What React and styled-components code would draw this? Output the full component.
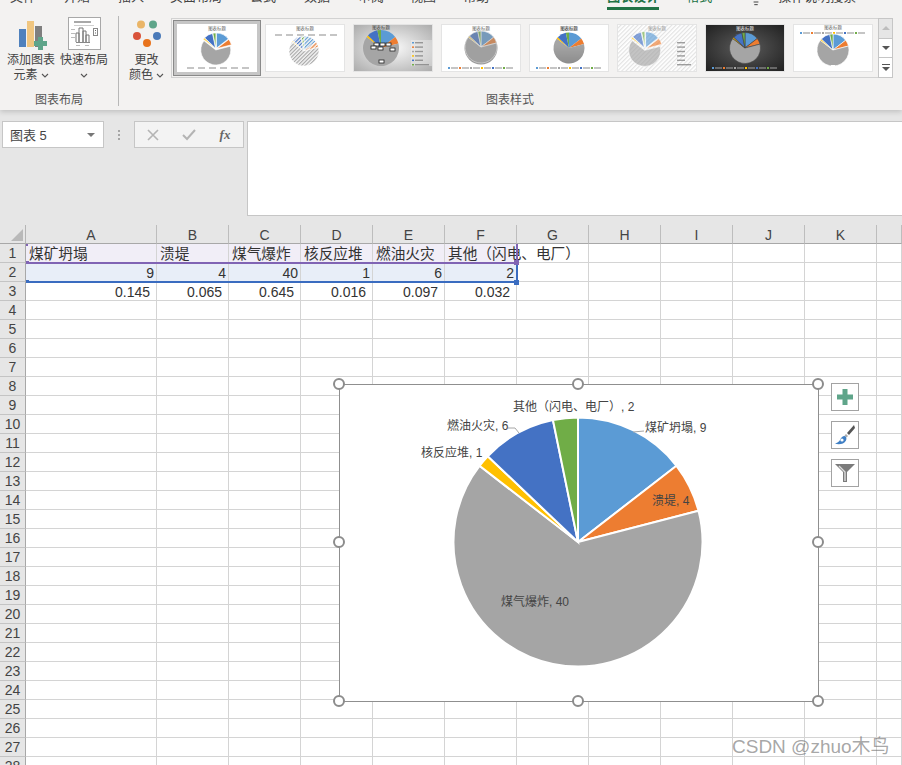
import React from "react";
import styled, { createGlobalStyle } from "styled-components";
import { Lightbulb } from "lucide-react";

const CJK = `"Liberation Sans", "Noto Sans CJK SC", sans-serif`;

const GlobalStyle = createGlobalStyle`
  html, body {
    margin: 0;
    padding: 0;
    background: #fff;
  }
  body {
    font-family: ${CJK};
    overflow: hidden;
  }
`;

const Page = styled.div`
  width: 902px;
  height: 765px;
  overflow: hidden;
  position: relative;
  background: #fff;
`;

const Ribbon = styled.div`
  height: 110px;
  background: #f3f2f1;
  box-shadow: 0 2px 5px rgba(0, 0, 0, 0.16);
  position: relative;
  z-index: 2;
`;

const TabBar = styled.div`
  height: 10px;
  overflow: hidden;
  display: flex;
  padding-left: 10px;
`;

const Tab = styled.div`
  height: 20px;
  margin-top: -10px;
  margin-left: ${props => props.$gap || 28}px;
  box-sizing: border-box;
  font-size: ${props => props.$size || 13}px;
  line-height: 13px;
  color: ${props => (props.$green ? "#217346" : "#444")};
  font-weight: ${props => (props.$active ? 700 : 400)};
  border-bottom: ${props => (props.$active ? "3px solid #217346" : "none")};
  white-space: nowrap;
  &:first-child {
    margin-left: 0;
  }
`;

const BulbWrap = styled.div`
  margin-left: 36px;
  margin-top: -10px;
  color: #444;
`;

const SearchTab = styled(Tab)`
  margin-left: 14px;
`;

const RibbonBody = styled.div`
  height: 100px;
  display: flex;
`;

const Group = styled.div`
  width: ${props => props.$width}px;
  flex: none;
  display: flex;
  flex-direction: column;
  box-sizing: border-box;
  position: relative;
`;

const GroupDivider = styled.div`
  width: 1px;
  height: 90px;
  margin-top: 6px;
  background: #b8b8b8;
  flex: none;
`;

const GroupRow = styled.div`
  height: 80px;
  display: flex;
  padding-top: ${props => props.$top || 0}px;
  padding-left: ${props => props.$left || 0}px;
  box-sizing: border-box;
`;

const GroupLabel = styled.div`
  font-size: 12px;
  line-height: 14px;
  color: #555;
  text-align: center;
  margin-top: 3px;
`;

const GalleryLabel = styled(GroupLabel)`
  margin-top: 15px;
  margin-right: 52px;
`;

const RibbonButton = styled.div`
  width: ${props => props.$width}px;
  display: flex;
  flex-direction: column;
  align-items: center;
  font-size: 12px;
  line-height: 15px;
  color: #444;
`;

const ButtonIcon = styled.div`
  height: 32px;
  box-sizing: border-box;
  display: flex;
  align-items: flex-end;
  margin-bottom: 3px;
  padding-left: ${props => props.$shift || 0}px;
  padding-bottom: ${props => props.$lift || 0}px;
`;

const ButtonLine = styled.div`
  display: flex;
  align-items: center;
  gap: 3px;
  height: 15px;
  white-space: nowrap;
`;

const Gallery = styled.div`
  display: flex;
  height: 60px;
  margin-top: 8px;
  margin-left: 1px;
`;

const GalleryTrack = styled.div`
  width: 707px;
  height: 60px;
  box-sizing: border-box;
  border: 1px solid #d2d2d2;
  border-right: none;
  display: flex;
  align-items: center;
  gap: 8px;
  padding-left: 1px;
`;

const Selected = styled.div`
  width: 88px;
  height: 56px;
  box-sizing: border-box;
  border: 1px solid #8a8a8a;
  background: #c6c6c6;
  display: flex;
  align-items: center;
  justify-content: center;
  margin-right: -4px;
  flex: none;
`;

const Thumb = styled.div`
  width: 80px;
  height: 48px;
  flex: none;
  box-sizing: border-box;
  border: ${props => (props.$plain ? "none" : "1px solid #e4e4e4")};
  background: #fff;
  overflow: hidden;
  svg {
    display: block;
    margin: ${props => (props.$plain ? "0" : "-1px")};
  }
`;

const Scroller = styled.div`
  width: 15px;
  height: 60px;
  box-sizing: border-box;
  border: 1px solid #c6c6c6;
  display: flex;
  flex-direction: column;
  background: #fff;
`;

const ScrollBtn = styled.div`
  flex: 1;
  display: flex;
  align-items: center;
  justify-content: center;
  background: ${props => (props.$off ? "#e6e6e6" : "#fff")};
  border-bottom: ${props => (props.$last ? "none" : "1px solid #c6c6c6")};
`;

const FormulaArea = styled.div`
  height: 115px;
  background: #e6e6e6;
  display: flex;
  align-items: flex-start;
  padding: 11px 0 0 2px;
  box-sizing: border-box;
`;

const NameBox = styled.div`
  width: 102px;
  height: 27px;
  box-sizing: border-box;
  background: #fff;
  border: 1px solid #c6c6c6;
  display: flex;
  align-items: center;
  justify-content: space-between;
  padding: 0 8px 0 7px;
  font-size: 13px;
  color: #444;
`;

const DownArrow = styled.div`
  width: 0;
  height: 0;
  border-left: 4px solid transparent;
  border-right: 4px solid transparent;
  border-top: 4px solid #777;
`;

const Dots = styled.div`
  width: 30px;
  height: 27px;
  display: flex;
  flex-direction: column;
  align-items: center;
  justify-content: center;
  gap: 2px;
  i {
    width: 2px;
    height: 2px;
    background: #a6a6a6;
  }
`;

const FormulaButtons = styled.div`
  width: 110px;
  height: 27px;
  box-sizing: border-box;
  background: #f3f3f3;
  border: 1px solid #c6c6c6;
  display: grid;
  grid-template-columns: repeat(3, 36px);
  align-items: center;
  justify-items: center;
  color: #b4b4b4;
`;

const Fx = styled.span`
  font-family: "Liberation Serif", serif;
  font-style: italic;
  font-weight: 700;
  font-size: 13px;
  color: #666;
`;

const FormulaInput = styled.div`
  flex: 1;
  height: 93px;
  margin-left: 3px;
  background: #fff;
  border: 1px solid #c6c6c6;
  border-right: none;
`;

const Sheet = styled.div`
  position: relative;
  display: grid;
  grid-template-columns: 26px 131px repeat(10, 72px) 25px;
  grid-template-rows: 19px;
  grid-auto-rows: 19px;
`;

const Corner = styled.div`
  background: #e6e6e6;
  border-right: 1px solid #b5b5b5;
  border-bottom: 1px solid #a8a8a8;
  box-sizing: border-box;
  position: relative;
  &::after {
    content: "";
    position: absolute;
    left: 11px;
    top: 4px;
    width: 12px;
    height: 12px;
    background: #b9b9b9;
    clip-path: polygon(100% 0, 100% 100%, 0 100%);
  }
`;

const ColHead = styled.div`
  background: #e6e6e6;
  border-right: 1px solid #bdbdbd;
  border-bottom: 1px solid #a8a8a8;
  box-sizing: border-box;
  font-size: 14px;
  line-height: 21px;
  text-align: center;
  color: #444;
`;

const RowHead = styled.div`
  background: #e6e6e6;
  border-right: 1px solid #a8a8a8;
  border-bottom: 1px solid #c4c4c4;
  box-sizing: border-box;
  font-size: 14px;
  line-height: 19px;
  text-align: center;
  color: #444;
`;

const Cell = styled.div`
  background: ${props => props.$tint || "transparent"};
  border-right: ${props => (props.$open ? "none" : "1px solid #d4d4d4")};
  border-bottom: 1px solid #d4d4d4;
  box-sizing: border-box;
  font-size: ${props => (props.$num ? 14 : 14.67)}px;
  line-height: 20px;
  color: #333;
  padding: 0 ${props => props.$pad || 0}px 0 ${props => (props.$num ? 0 : 3)}px;
  text-align: ${props => (props.$num ? "right" : "left")};
  white-space: nowrap;
  min-width: 0;
`;

const RangeLine = styled.div`
  position: absolute;
  left: 27px;
  width: 489px;
  height: 2px;
  top: ${props => props.$top}px;
  background: ${props => props.$color};
`;

const RangeEdge = styled.div`
  position: absolute;
  left: 516px;
  width: 2px;
  top: ${props => props.$top}px;
  height: ${props => props.$height}px;
  background: ${props => props.$color};
`;

const RangeKnob = styled.div`
  position: absolute;
  left: ${props => props.$left}px;
  top: ${props => props.$top}px;
  width: ${props => props.$size}px;
  height: ${props => props.$size}px;
  background: ${props => props.$color};
`;

const ChartFrame = styled.div`
  position: absolute;
  left: 339px;
  top: 159px;
  width: 480px;
  height: 318px;
  box-sizing: border-box;
  background: #fff;
  border: 1px solid #8f8f8f;
`;

const Handle = styled.div`
  position: absolute;
  left: ${props => props.$x}px;
  top: ${props => props.$y}px;
  width: 12px;
  height: 12px;
  box-sizing: border-box;
  border-radius: 50%;
  background: #fff;
  border: 2px solid #8c8c8c;
  transform: translate(-50%, -50%);
`;

const SideTools = styled.div`
  position: absolute;
  left: 831px;
  top: 158px;
  display: flex;
  flex-direction: column;
  gap: 10px;
`;

const SideTool = styled.div`
  width: 28px;
  height: 28px;
  box-sizing: border-box;
  background: #fff;
  border: 1px solid #a3a3a3;
  display: flex;
  align-items: center;
  justify-content: center;
`;

const Watermark = styled.div`
  position: absolute;
  left: 732px;
  top: 735px;
  font-size: 19px;
  line-height: 24px;
  color: rgba(110, 110, 110, 0.62);
  white-space: nowrap;
  z-index: 4;
`;

const ChartText = styled.text`
  font-family: ${CJK};
  font-size: 12px;
  fill: #444;
`;

const TitleText = styled.text`
  font-family: ${CJK};
  font-size: 4.4px;
  text-anchor: middle;
  fill: ${props => props.$fill || "#666"};
`;

const SERIES = [
  { label: "煤矿坍塌", value: 9, color: "#5b9bd5" },
  { label: "溃堤", value: 4, color: "#ed7d31" },
  { label: "煤气爆炸", value: 40, color: "#a5a5a5" },
  { label: "核反应堆", value: 1, color: "#ffc000" },
  { label: "燃油火灾", value: 6, color: "#4472c4" },
  { label: "其他（闪电、电厂）", value: 2, color: "#70ad47" }
];

const TOTAL = SERIES.reduce((sum, s) => sum + s.value, 0);

const getSlices = (cx, cy, r, explode = 0) => {
  let start = 0;
  return SERIES.map(s => {
    const end = start + (s.value / TOTAL) * Math.PI * 2;
    const mid = (start + end) / 2;
    const ox = cx + Math.sin(mid) * explode;
    const oy = cy - Math.cos(mid) * explode;
    const x1 = ox + Math.sin(start) * r;
    const y1 = oy - Math.cos(start) * r;
    const x2 = ox + Math.sin(end) * r;
    const y2 = oy - Math.cos(end) * r;
    const large = end - start > Math.PI ? 1 : 0;
    start = end;
    return {
      ...s,
      d: `M${ox} ${oy}L${x1} ${y1}A${r} ${r} 0 ${large} 1 ${x2} ${y2}Z`
    };
  });
};

const legendCols = ["#5b9bd5", "#ed7d31", "#a5a5a5", "#ffc000", "#4472c4", "#70ad47"];

const BottomLegend = ({ y, colored, fill = "#777" }) => (
  <g>
    {legendCols.map((c, i) => (
      <g key={c}>
        {colored && <rect x={7 + i * 11} y={y} width={2} height={2} fill={c} />}
        <rect x={10 + i * 11} y={y + 0.4} width={7} height={1.2} fill={fill} opacity="0.7" />
      </g>
    ))}
  </g>
);

const SideLegend = ({ x, y, colored }) => (
  <g>
    {legendCols.map((c, i) => (
      <g key={c}>
        {colored && <rect x={x} y={y + i * 4.4} width={2} height={1.5} fill={c} />}
        <rect x={x + 3} y={y + i * 4.4} width={i === 5 ? 14 : 8} height={1.4} fill="#777" opacity="0.7" />
      </g>
    ))}
  </g>
);

const MiniPie = ({ cx, cy, r, explode, stroke = "#fff", fade, hatch, gray }) => (
  <g>
    {getSlices(cx, cy, r, explode).map(s => (
      <path
        key={s.label}
        d={s.d}
        fill={hatch ? `url(#hatch-${s.value})` : s.color}
        fillOpacity={fade || 1}
        stroke={stroke}
        strokeWidth="0.6"
      />
    ))}
    {gray && <circle cx={cx} cy={cy} r={r} fill={`url(#${gray})`} />}
  </g>
);

const HatchDefs = () => (
  <defs>
    {SERIES.map(s => (
      <pattern
        key={s.value}
        id={`hatch-${s.value}`}
        width="2.6"
        height="2.6"
        patternUnits="userSpaceOnUse"
        patternTransform="rotate(45)"
      >
        <rect width="2.6" height="2.6" fill="#f4f4f4" />
        <rect width="1.1" height="2.6" fill={s.color} />
      </pattern>
    ))}
  </defs>
);

const ThumbStyle1 = () => (
  <svg width="80" height="48">
    <TitleText x="40" y="6">图表标题</TitleText>
    <MiniPie cx={39} cy={25} r={15} explode={1} />
    <BottomLegend y={43} />
  </svg>
);

const ThumbStyle2 = () => (
  <svg width="80" height="48">
    <HatchDefs />
    <TitleText x="40" y="6">图表标题</TitleText>
    <BottomLegend y={10} />
    <MiniPie cx={39} cy={27} r={15} hatch />
  </svg>
);

const ThumbStyle3 = () => (
  <svg width="80" height="48">
    <defs>
      <radialGradient id="bg3" cx="50%" cy="50%" r="70%">
        <stop offset="0%" stopColor="#fafafa" />
        <stop offset="100%" stopColor="#aaa" />
      </radialGradient>
    </defs>
    <rect width="80" height="48" fill="url(#bg3)" />
    <TitleText x="28" y="5" $fill="#444">图表标题</TitleText>
    <MiniPie cx={28} cy={24} r={18} stroke="none" />
    {[[21, 19], [27, 19], [33, 19], [18, 22], [25, 23], [37, 24], [26, 36]].map(([x, y]) => (
      <rect key={x} x={x} y={y} width="5" height="3" fill="#fff" stroke="#222" strokeWidth="0.8" />
    ))}
    <rect x="58" y="16" width="21" height="26" fill="#fff" opacity="0.3" />
    <SideLegend x={59} y={18} colored />
  </svg>
);

const ThumbStyle4 = () => (
  <svg width="80" height="48">
    <TitleText x="40" y="5.5">图表标题</TitleText>
    <circle cx="40" cy="24" r="16.5" fill="#999" />
    <MiniPie cx={40} cy={23} r={16} stroke="#ddd" fade={0.55} />
    <BottomLegend y={43} colored />
  </svg>
);

const ThumbStyle5 = () => (
  <svg width="80" height="48">
    <defs>
      <linearGradient id="dark5" x1="0" y1="0" x2="0" y2="1">
        <stop offset="40%" stopColor="#000" stopOpacity="0" />
        <stop offset="100%" stopColor="#000" stopOpacity="0.15" />
      </linearGradient>
    </defs>
    <rect x="32" y="2" width="16" height="5" fill="#e4e4e4" />
    <TitleText x="40" y="6" $fill="#333">图表标题</TitleText>
    <MiniPie cx={40} cy={24} r={15.5} stroke="none" gray="dark5" />
    <BottomLegend y={43} colored />
  </svg>
);

const ThumbStyle6 = () => (
  <svg width="80" height="48">
    <defs>
      <pattern id="bg6" width="3" height="3" patternUnits="userSpaceOnUse" patternTransform="rotate(45)">
        <rect width="3" height="3" fill="#fff" />
        <rect width="1.2" height="3" fill="#e2e2e2" />
      </pattern>
    </defs>
    <rect width="80" height="48" fill="url(#bg6)" />
    <TitleText x="40" y="6" $fill="#999">图表标题</TitleText>
    <MiniPie cx={28} cy={25} r={16} explode={1.4} fade={0.65} />
    <SideLegend x={57} y={18} />
  </svg>
);

const ThumbStyle7 = () => (
  <svg width="80" height="48">
    <defs>
      <radialGradient id="bg7" cx="50%" cy="50%" r="70%">
        <stop offset="0%" stopColor="#5c5c5c" />
        <stop offset="100%" stopColor="#1f1f1f" />
      </radialGradient>
    </defs>
    <rect width="80" height="48" fill="url(#bg7)" />
    <TitleText x="40" y="6" $fill="#eee">图表标题</TitleText>
    <MiniPie cx={40} cy={24} r={15.5} stroke="#444" />
    <BottomLegend y={43} colored fill="#bbb" />
  </svg>
);

const ThumbStyle8 = () => (
  <svg width="80" height="48">
    <TitleText x="40" y="5">图表标题</TitleText>
    <BottomLegend y={8} colored />
    <MiniPie cx={40} cy={26} r={16} />
    <rect x="38" y="41" width="4" height="1.5" fill="#fff" />
  </svg>
);

const Chevron = () => (
  <svg width="8" height="5" viewBox="0 0 8 5">
    <path d="M1 1l3 3 3-3" fill="none" stroke="#555" strokeWidth="1.1" />
  </svg>
);

const AddElementIcon = () => (
  <svg width="30" height="30" viewBox="0 0 30 30">
    <rect x="1" y="9" width="7" height="18" fill="#4f81bd" />
    <rect x="9" y="1" width="7" height="26" fill="#f0c680" />
    <rect x="17" y="6" width="7" height="21" fill="#7f7f7f" />
    <path d="M20 17h5v4h4v5h-4v4h-5v-4h-4v-5h4z" fill="#5fa58a" />
  </svg>
);

const QuickLayoutIcon = () => (
  <svg width="33" height="33" viewBox="0 0 33 33">
    <rect x="0.5" y="0.5" width="32" height="32" fill="#fff" stroke="#a8a8a8" />
    <rect x="6" y="4" width="17" height="2" fill="#a8a8a8" />
    <rect x="6" y="8" width="20" height="1" fill="#cfcfcf" />
    <rect x="3" y="12" width="4" height="1" fill="#bbb" />
    <rect x="3" y="16" width="4" height="1" fill="#bbb" />
    <rect x="3" y="20" width="4" height="1" fill="#bbb" />
    <path d="M8 25V16h3v9M11 25V11h4v14M15 25V14h3v11M18 25V18h3v7" fill="#fff" stroke="#777" />
    <rect x="8" y="25" width="14" height="1" fill="#888" />
    <rect x="25.5" y="11.5" width="4" height="7" fill="#fff" stroke="#888" />
    <rect x="27" y="13" width="1" height="1" fill="#666" />
    <rect x="27" y="15.5" width="1" height="1" fill="#666" />
    <rect x="8" y="28" width="4" height="1" fill="#bbb" />
    <rect x="17" y="28" width="4" height="1" fill="#bbb" />
  </svg>
);

const ColorDotsIcon = () => (
  <svg width="30" height="28" viewBox="0 0 30 28">
    <circle cx="9" cy="4.5" r="4" fill="#eab567" />
    <circle cx="21" cy="4.5" r="4" fill="#5fa58a" />
    <circle cx="5" cy="16" r="4" fill="#d9533a" />
    <circle cx="25" cy="16" r="4" fill="#4a7ab8" />
    <circle cx="15" cy="23" r="4" fill="#e8731c" />
  </svg>
);

const BrushIcon = () => (
  <svg width="22" height="22" viewBox="0 0 22 22">
    <path d="M20 1l1 3-6 7-2-2z" fill="#555" />
    <path d="M12 10l2 2-1.5 1.5-2-2z" fill="#aaa" />
    <path d="M11 12c-3 0-4 2-5 4-1 2-3 3-5 3.5 3 1.5 9 1 11-3 .8-1.6.5-3.4-1-4.5z" fill="#3f7fc4" />
    <circle cx="8" cy="16" r="1.6" fill="#fff" />
  </svg>
);

const FunnelIcon = () => (
  <svg width="22" height="20" viewBox="0 0 22 20">
    <path d="M1 1h20l-8 8v10H9V9z" fill="#7b7b7b" />
    <path d="M5 3l6 6v9" fill="none" stroke="#ddd" strokeWidth="1.4" />
  </svg>
);

const COLS = ["A", "B", "C", "D", "E", "F", "G", "H", "I", "J", "K", ""];

const CELLS = {
  1: ["煤矿坍塌", "溃堤", "煤气爆炸", "核反应堆", "燃油火灾", "其他（闪电、电厂）"],
  2: ["9", "4", "40", "1", "6", "2"],
  3: ["0.145", "0.065", "0.645", "0.016", "0.097", "0.032"]
};

const TINTS = { 1: "#f1eef7", 2: "#e8eef8" };

const HANDLES = [
  [339, 159],
  [578, 159],
  [818, 159],
  [339, 317],
  [818, 317],
  [339, 476],
  [578, 476],
  [818, 476]
];

const LABELS = [
  { text: "其他（闪电、电厂）, 2", x: 173, y: 26 },
  { text: "煤矿坍塌, 9", x: 305, y: 47 },
  { text: "燃油火灾, 6", x: 107, y: 45 },
  { text: "核反应堆, 1", x: 81, y: 72 },
  { text: "溃堤, 4", x: 312, y: 120 },
  { text: "煤气爆炸, 40", x: 161, y: 221 }
];

const THUMBS = [ThumbStyle2, ThumbStyle3, ThumbStyle4, ThumbStyle5, ThumbStyle6, ThumbStyle7, ThumbStyle8];

const App = () => {
  const rows = Array.from({ length: 28 }, (_, i) => i + 1);
  return (
    <Page>
      <GlobalStyle />
      <Ribbon>
        <TabBar>
          <Tab>文件</Tab>
          <Tab>开始</Tab>
          <Tab>插入</Tab>
          <Tab $gap={26}>页面布局</Tab>
          <Tab>公式</Tab>
          <Tab>数据</Tab>
          <Tab>审阅</Tab>
          <Tab $gap={26}>视图</Tab>
          <Tab $gap={27}>帮助</Tab>
          <Tab $gap={27} $size={12}>NORDVPN</Tab>
          <Tab $gap={31} $green $active>图表设计</Tab>
          <Tab $gap={27} $green>格式</Tab>
          <BulbWrap>
            <Lightbulb size={16} strokeWidth={1.5} />
          </BulbWrap>
          <SearchTab>操作说明搜索</SearchTab>
        </TabBar>
        <RibbonBody>
          <Group $width={118}>
            <GroupRow $top={8} $left={4}>
              <RibbonButton $width={54}>
                <ButtonIcon $shift={4}><AddElementIcon /></ButtonIcon>
                <ButtonLine>添加图表</ButtonLine>
                <ButtonLine>元素 <Chevron /></ButtonLine>
              </RibbonButton>
              <RibbonButton $width={52}>
                <ButtonIcon><QuickLayoutIcon /></ButtonIcon>
                <ButtonLine>快速布局</ButtonLine>
                <ButtonLine><Chevron /></ButtonLine>
              </RibbonButton>
            </GroupRow>
            <GroupLabel>图表布局</GroupLabel>
          </Group>
          <GroupDivider />
          <Group $width={51}>
            <GroupRow $top={8} $left={4}>
              <RibbonButton $width={50}>
                <ButtonIcon $lift={2}><ColorDotsIcon /></ButtonIcon>
                <ButtonLine>更改</ButtonLine>
                <ButtonLine>颜色 <Chevron /></ButtonLine>
              </RibbonButton>
            </GroupRow>
          </Group>
          <Group $width={732}>
            <Gallery>
              <GalleryTrack>
                <Selected>
                  <Thumb $plain><ThumbStyle1 /></Thumb>
                </Selected>
                {THUMBS.map((Style, i) => (
                  <Thumb key={i}><Style /></Thumb>
                ))}
              </GalleryTrack>
              <Scroller>
                <ScrollBtn $off>
                  <svg width="8" height="5"><path d="M0 4h8L4 0z" fill="#bdbdbd" /></svg>
                </ScrollBtn>
                <ScrollBtn>
                  <svg width="8" height="5"><path d="M0 0h8L4 4z" fill="#555" /></svg>
                </ScrollBtn>
                <ScrollBtn $last>
                  <svg width="8" height="8">
                    <rect width="8" height="1" fill="#555" />
                    <path d="M0 3h8L4 7z" fill="#555" />
                  </svg>
                </ScrollBtn>
              </Scroller>
            </Gallery>
            <GalleryLabel>图表样式</GalleryLabel>
          </Group>
        </RibbonBody>
      </Ribbon>

      <FormulaArea>
        <NameBox>
          图表 5
          <DownArrow />
        </NameBox>
        <Dots><i /><i /><i /></Dots>
        <FormulaButtons>
          <svg width="12" height="12"><path d="M1 1l10 10M11 1L1 11" stroke="#b4b4b4" strokeWidth="1.6" /></svg>
          <svg width="14" height="12"><path d="M1 6l4 4 8-9" fill="none" stroke="#b4b4b4" strokeWidth="2" /></svg>
          <Fx>fx</Fx>
        </FormulaButtons>
        <FormulaInput />
      </FormulaArea>

      <Sheet>
        <Corner />
        {COLS.map((c, i) => (
          <ColHead key={i}>{c}</ColHead>
        ))}
        {rows.map(r => (
          <React.Fragment key={r}>
            <RowHead>{r}</RowHead>
            {COLS.map((_, i) => {
              const value = CELLS[r] ? CELLS[r][i] : undefined;
              return (
                <Cell
                  key={i}
                  $num={r > 1}
                  $pad={r === 3 ? 6 : 2}
                  $tint={i < 6 ? TINTS[r] : undefined}
                  $open={r === 1 && i === 5}
                >
                  {value}
                </Cell>
              );
            })}
          </React.Fragment>
        ))}

        <RangeLine $top={37} $color="#8064b4" />
        <RangeLine $top={56} $color="#3a6cc0" />
        <RangeKnob $left={26} $top={19} $size={2} $color="#8064b4" />
        <RangeKnob $left={26} $top={36} $size={3} $color="#8064b4" />
        <RangeKnob $left={26} $top={55} $size={3} $color="#3a6cc0" />
        <RangeEdge $top={19} $height={16} $color="#8064b4" />
        <RangeEdge $top={40} $height={16} $color="#3a6cc0" />
        <RangeKnob $left={514} $top={35} $size={5} $color="#8064b4" />
        <RangeKnob $left={514} $top={55} $size={5} $color="#3a6cc0" />

        <ChartFrame>
          <svg width="478" height="316">
            {getSlices(238, 157, 124.5).map(s => (
              <path key={s.label} d={s.d} fill={s.color} stroke="#fff" strokeWidth="2" />
            ))}
            <path d="M293 47l11-1" fill="none" stroke="#a6a6a6" />
            <path d="M168 43h7l4 5" fill="none" stroke="#a6a6a6" />
            {LABELS.map(l => (
              <ChartText key={l.text} x={l.x} y={l.y}>{l.text}</ChartText>
            ))}
          </svg>
        </ChartFrame>
        {HANDLES.map(([x, y]) => (
          <Handle key={`${x}-${y}`} $x={x} $y={y} />
        ))}
        <SideTools>
          <SideTool>
            <svg width="16" height="16"><path d="M5.5 0h5v5.5H16v5h-5.5V16h-5v-5.5H0v-5h5.5z" fill="#5fa58a" /></svg>
          </SideTool>
          <SideTool><BrushIcon /></SideTool>
          <SideTool><FunnelIcon /></SideTool>
        </SideTools>
      </Sheet>
      <Watermark>CSDN @zhuo木鸟</Watermark>
    </Page>
  );
};

export default App;
